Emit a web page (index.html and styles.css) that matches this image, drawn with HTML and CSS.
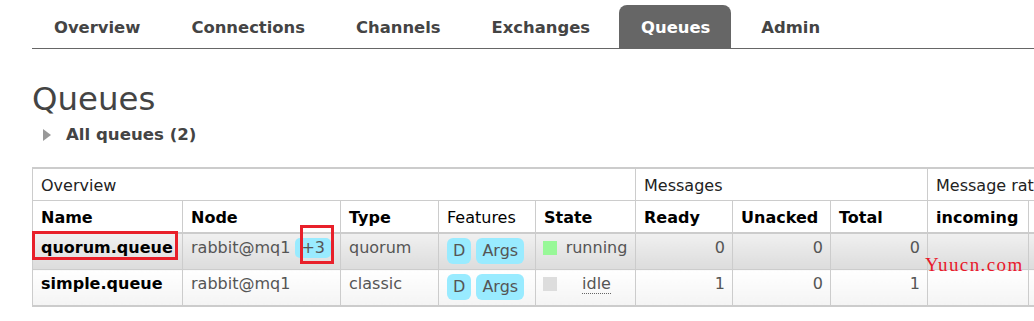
FILE: index.html
```html
<!DOCTYPE html>
<html lang="en">
<head>
<meta charset="utf-8">
<title>Queues</title>
<link rel="stylesheet" href="styles.css">
</head>
<body>
<div class="page">
  <nav class="tabs">
    <a class="tab">Overview</a>
    <a class="tab">Connections</a>
    <a class="tab">Channels</a>
    <a class="tab">Exchanges</a>
    <a class="tab tab-active">Queues</a>
    <a class="tab">Admin</a>
  </nav>
  <h1 class="title">Queues</h1>
  <div class="toggle"><span class="tri"></span><span class="toggle-label">All queues (2)</span></div>
  <div class="table-wrap">
    <table class="list">
      <colgroup>
        <col class="c-name"><col class="c-node"><col class="c-type"><col class="c-feat"><col class="c-state">
        <col class="c-num"><col class="c-unacked"><col class="c-num"><col class="c-rate"><col class="c-rate">
      </colgroup>
      <thead>
        <tr class="group">
          <th colspan="5">Overview</th>
          <th colspan="3">Messages</th>
          <th colspan="2">Message rates</th>
        </tr>
        <tr class="cols">
          <th>Name</th>
          <th>Node</th>
          <th>Type</th>
          <th class="plain">Features</th>
          <th>State</th>
          <th>Ready</th>
          <th>Unacked</th>
          <th>Total</th>
          <th>incoming</th>
          <th>deliver / get</th>
        </tr>
      </thead>
      <tbody>
        <tr class="alt1">
          <td class="qname">quorum.queue</td>
          <td>rabbit@mq1 <span class="badge badge-slim">+3</span></td>
          <td>quorum</td>
          <td><span class="badge">D</span> <span class="badge">Args</span></td>
          <td><div class="state"><span class="sq sq-green"></span><span class="state-label">running</span></div></td>
          <td class="num">0</td>
          <td class="num">0</td>
          <td class="num">0</td>
          <td></td>
          <td></td>
        </tr>
        <tr class="alt2">
          <td class="qname">simple.queue</td>
          <td>rabbit@mq1</td>
          <td>classic</td>
          <td><span class="badge">D</span> <span class="badge">Args</span></td>
          <td><div class="state"><span class="sq sq-grey"></span><span class="state-label"><span class="abbr">idle</span></span></div></td>
          <td class="num">1</td>
          <td class="num">0</td>
          <td class="num">1</td>
          <td></td>
          <td></td>
        </tr>
      </tbody>
    </table>
  </div>
  <div class="mark mark-name"></div>
  <div class="mark mark-plus"></div>
  <div class="watermark">Yuucn.com</div>
</div>
</body>
</html>
```
FILE: styles.css
```css
html, body {
  margin: 0;
  padding: 0;
  overflow: hidden;
  background: #fff;
}
body {
  font-family: "DejaVu Sans", Verdana, sans-serif;
  font-size: 16px;
  color: #444;
}
.page {
  position: relative;
  padding-left: 32px;
  height: 321px;
}
.tabs {
  display: flex;
  padding-top: 5px;
  border-bottom: 1px solid #666;
}
.tab {
  display: block;
  padding: 13px 21px 11px 22px;
  margin-right: 8px;
  font-size: 16.4px;
  font-weight: bold;
  line-height: 19px;
  color: #444;
  border-radius: 8px 8px 0 0;
}
.tab-active {
  background: #666;
  color: #fff;
}
.title {
  margin: 31px 0 0 0;
  font-size: 32.4px;
  font-weight: normal;
  line-height: 38px;
  color: #444;
}
.toggle {
  display: flex;
  align-items: center;
  margin: 7px 0 0 11px;
  font-size: 16.6px;
  font-weight: bold;
  line-height: 19px;
  color: #444;
}
.tri {
  width: 0;
  height: 0;
  border-left: 8px solid #999;
  border-top: 6px solid transparent;
  border-bottom: 6px solid transparent;
  margin-right: 15px;
}
.table-wrap {
  overflow: hidden;
  margin-top: 23px;
}
.list {
  border-collapse: collapse;
  table-layout: fixed;
  width: 1096px;
  border-top: 2px solid #ccc;
  border-bottom: 2px solid #ccc;
}
.c-name { width: 150px; }
.c-node { width: 158px; }
.c-type { width: 98px; }
.c-feat { width: 97px; }
.c-state { width: 100px; }
.c-num { width: 97px; }
.c-unacked { width: 98px; }
.c-rate { width: 101px; }
.list th, .list td {
  border: 1px solid #ccc;
  padding: 7px 7px 4px 8px;
  line-height: 20px;
  text-align: left;
  vertical-align: top;
  white-space: nowrap;
  overflow: hidden;
}
.list th {
  color: #000;
  background: #fff;
}
.group th {
  font-weight: normal;
  color: #222;
}
.cols th {
  border-bottom: 2px solid #ccc;
}
.cols th.plain {
  font-weight: normal;
}
.list td {
  padding: 4px 7px 5px 8px;
  color: #555;
}
.alt1 td {
  background: linear-gradient(#f0f0f0, #dcdcdc);
}
.alt2 td {
  background: linear-gradient(#ffffff, #f4f4f4);
}
.list td.qname {
  font-weight: bold;
  color: #000;
}
.list td.num {
  text-align: right;
}
.badge {
  display: inline-block;
  padding: 3px 6px;
  line-height: 20px;
  background: #99ebff;
  border-radius: 6px;
  color: #555;
}
.badge-slim {
  padding: 0 6px;
  border-radius: 5px;
}
.state {
  display: flex;
  align-items: center;
}
.sq {
  width: 14px;
  height: 14px;
  margin-left: -1px;
  margin-right: 8px;
  flex: none;
}
.sq-green { background: #98f898; }
.sq-grey { background: #ddd; }
.state-label {
  flex: 1;
  text-align: center;
}
.abbr {
  border-bottom: 1px dotted #666;
}
.mark {
  position: absolute;
  box-sizing: border-box;
  border: 3px solid #e8202a;
}
.mark-name {
  left: 32px;
  top: 231px;
  width: 146px;
  height: 29px;
}
.mark-plus {
  left: 300px;
  top: 225px;
  width: 34px;
  height: 39px;
}
.watermark {
  position: absolute;
  left: 925px;
  top: 255px;
  font-family: "Liberation Serif", "Times New Roman", serif;
  font-size: 19px;
  line-height: 19px;
  letter-spacing: 1.4px;
  color: #e8192c;
}
```
